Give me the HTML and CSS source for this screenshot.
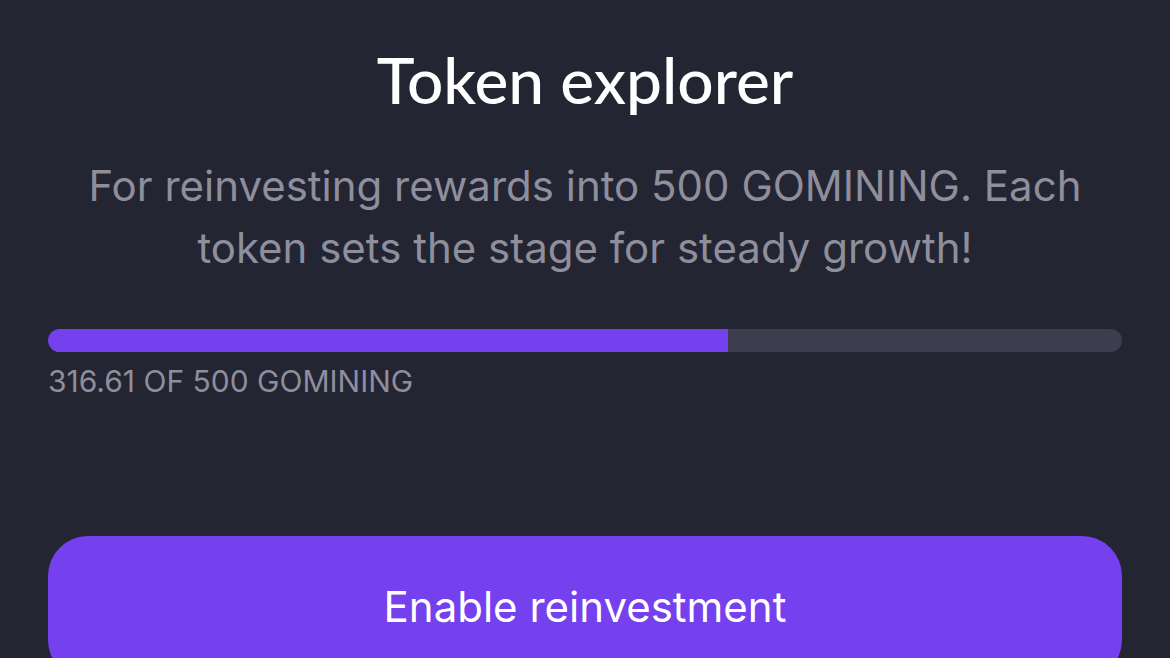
FILE: index.html
```html
<!DOCTYPE html>
<html>
<head>
<meta charset="utf-8">
<link rel="stylesheet" href="styles.css">
</head>
<body>
<main class="screen">
  <h1 class="title">Token explorer</h1>
  <p class="subtitle">For reinvesting rewards into 500 GOMINING. Each token sets the stage for steady growth!</p>
  <div class="progress">
    <div class="progress-track"><div class="progress-fill" style="width: 63.32%"></div></div>
    <div class="progress-label">316.61 OF 500 GOMINING</div>
  </div>
  <button class="cta">Enable reinvestment</button>
</main>
</body>
</html>
```
FILE: styles.css
```css
html, body {
  margin: 0;
  padding: 0;
  background: #232532;
  height: 100%;
  overflow: hidden;
}
.screen {
  display: flex;
  flex-direction: column;
  padding: 0 48px;
  font-family: Inter, "Noto Sans", sans-serif;
}
.title {
  margin: 44px 0 0;
  text-align: center;
  font-family: Lato, sans-serif;
  font-weight: 500;
  font-size: 64px;
  line-height: 72px;
  color: #ffffff;
}
.subtitle {
  margin: 39px 10px 0;
  text-align: center;
  font-size: 42px;
  line-height: 62px;
  color: #8e8e9c;
  font-weight: 400;
}
.progress {
  margin-top: 50px;
  display: flex;
  flex-direction: column;
  gap: 11px;
}
.progress-track {
  height: 23px;
  border-radius: 12px;
  background: #3d3d4f;
  overflow: hidden;
}
.progress-fill {
  height: 100%;
  background: #7540ee;
  border-radius: 12px 0 0 12px;
}
.progress-label {
  font-size: 30px;
  line-height: 36px;
  color: #8e8e9c;
}
.cta {
  margin-top: 137px;
  height: 144px;
  border: none;
  border-radius: 40px;
  background: #7540ee;
  color: #ffffff;
  font-family: Inter, sans-serif;
  font-size: 42px;
  font-weight: 400;
  display: flex;
  justify-content: center;
  align-items: flex-start;
  padding: 45px 0 0;
}
```
